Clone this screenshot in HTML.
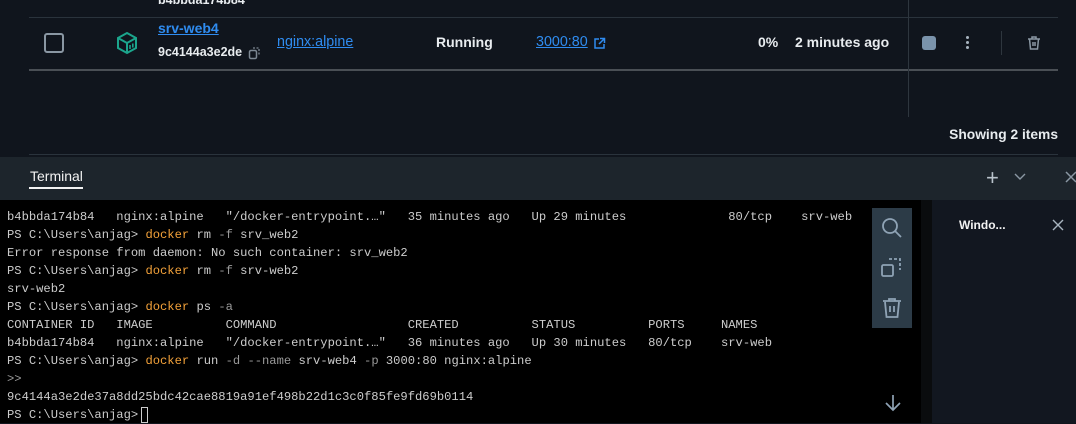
<!DOCTYPE html>
<html><head><style>
*{margin:0;padding:0;box-sizing:border-box}
body{width:1076px;height:423px;overflow:hidden;background:#10151d;font-family:"Liberation Sans",sans-serif;position:relative;color:#e8ecef}
.a{position:absolute}
.t{font-family:"Liberation Mono",monospace;font-size:12.15px;color:#cccccc;white-space:pre;line-height:18px}
.o{color:#f4a23a}.g{color:#9a9a9a}
</style></head><body>
<div class="a" style="left:29px;top:17px;width:1029px;height:1px;background:#2a333c"></div>
<div class="a" style="left:29px;top:69px;width:1029px;height:2px;background:#4a4f55"></div>
<div class="a" style="left:908px;top:0;width:1px;height:117px;background:#2e363e"></div>
<div class="a" style="left:1001px;top:31px;width:1px;height:24px;background:#2e363e"></div>
<div class="a" style="left:29px;top:154px;width:1029px;height:1px;background:#2a333c"></div>
<div class="a" style="left:158px;top:-7px;font-size:12.5px;font-weight:bold;color:#e8ecef">b4bbda174b84</div>
<div class="a" style="left:44px;top:33px;width:20px;height:20px;border:2px solid #8a97a3;border-radius:3px"></div>
<svg class="a" style="left:116px;top:31px" width="22" height="24" viewBox="0 0 22 24"><path d="M11 2L20 7V17L11 22L2 17V7Z M2 7L11 12L20 7 M11 12V22" fill="none" stroke="#1ba58c" stroke-width="2"/><path d="M14 18V14 M16.8 16.5V12.5" stroke="#1ba58c" stroke-width="1.6"/></svg>
<div class="a" style="left:158px;top:20px;font-size:14px;font-weight:bold;color:#2f8cf0;text-decoration:underline">srv-web4</div>
<div class="a" style="left:158px;top:45px;font-size:12.5px;font-weight:bold">9c4144a3e2de</div>
<svg class="a" style="left:248px;top:46px" width="14" height="14"><rect x="1.5" y="4.5" width="7" height="8" rx="1.5" fill="none" stroke="#7d8893" stroke-width="1.5"/><path d="M5 2h6v7" fill="none" stroke="#7d8893" stroke-width="1.3" stroke-dasharray="2 1.5"/></svg>
<div class="a" style="left:277px;top:34px;font-size:14.3px;color:#2f8cf0;text-decoration:underline">nginx:alpine</div>
<div class="a" style="left:436px;top:34px;font-size:14px;font-weight:bold">Running</div>
<div class="a" style="left:536px;top:34px;font-size:14.3px;color:#2f8cf0;text-decoration:underline">3000:80</div>
<svg class="a" style="left:593px;top:37px" width="13" height="13"><path d="M6 2H2v9h9V7 M7 1.5h4.5V6 M11.5 1.5L6 7" fill="none" stroke="#2f8cf0" stroke-width="1.5"/></svg>
<div class="a" style="left:758px;top:34px;font-size:14px;font-weight:bold">0%</div>
<div class="a" style="left:795px;top:34px;font-size:14px;font-weight:bold">2 minutes ago</div>
<div class="a" style="left:922px;top:36px;width:14px;height:14px;background:#7a93ab;border-radius:3px"></div>
<div class="a" style="left:966px;top:36px;width:3px;height:3px;background:#a8b4bf;border-radius:50%;box-shadow:0 5px 0 #a8b4bf,0 10px 0 #a8b4bf"></div>
<svg class="a" style="left:1026px;top:35px" width="16" height="16"><path d="M2 4h12 M6 4V2h4v2 M3.5 4l1 10h7l1-10 M7 7v4 M9 7v4" fill="none" stroke="#8a97a3" stroke-width="1.5"/></svg>
<div class="a" style="right:18px;top:127px;font-size:13.8px;font-weight:bold">Showing 2 items</div>
<div class="a" style="left:0;top:157px;width:1076px;height:43px;background:#1d252c"></div>
<div class="a" style="left:30px;top:168px;font-size:14px;color:#f2f2f2">Terminal</div>
<div class="a" style="left:29px;top:187px;width:54px;height:2px;background:#f2f2f2"></div>
<div class="a" style="left:986px;top:165px;font-size:22px;color:#b9c3cc">+</div>
<svg class="a" style="left:1013px;top:172px" width="14" height="10"><path d="M2 2l5 5 5-5" fill="none" stroke="#8a97a3" stroke-width="1.4"/></svg>
<svg class="a" style="left:1064px;top:170px" width="12" height="14"><path d="M2 2l10 10 M12 2L2 12" stroke="#8a97a3" stroke-width="1.5"/></svg>
<div class="a" style="left:0;top:200px;width:921px;height:223px;background:#000"></div>
<div class="a" style="left:921px;top:200px;width:11px;height:223px;background:#0a0c0e"></div>
<div class="a" style="left:932px;top:200px;width:144px;height:223px;background:#121720"></div>
<div class="a" style="left:959px;top:218px;font-size:12px;font-weight:bold;color:#f2f2f2">Windo...</div>
<svg class="a" style="left:1052px;top:219px" width="12" height="12"><path d="M1 1l10 10 M11 1L1 11" stroke="#a8b4bf" stroke-width="1.4"/></svg>
<div class="a t" style="left:7px;top:208px">b4bbda174b84   nginx:alpine   "/docker-entrypoint.…"   35 minutes ago   Up 29 minutes              80/tcp    srv-web
PS C:\Users\anjag&gt; <span class="o">docker</span> rm <span class="g">-f</span> srv_web2
Error response from daemon: No such container: srv_web2
PS C:\Users\anjag&gt; <span class="o">docker</span> rm <span class="g">-f</span> srv-web2
srv-web2
PS C:\Users\anjag&gt; <span class="o">docker</span> ps <span class="g">-a</span>
CONTAINER ID   IMAGE          COMMAND                  CREATED          STATUS          PORTS     NAMES
b4bbda174b84   nginx:alpine   "/docker-entrypoint.…"   36 minutes ago   Up 30 minutes   80/tcp    srv-web
PS C:\Users\anjag&gt; <span class="o">docker</span> run <span class="g">-d --name</span> srv-web4 <span class="g">-p</span> 3000:80 nginx:alpine
<span class="g">&gt;&gt;</span>
9c4144a3e2de37a8dd25bdc42cae8819a91ef498b22d1c3c0f85fe9fd69b0114
PS C:\Users\anjag&gt;</div>
<div class="a" style="left:141px;top:407px;width:7px;height:16px;border:1px solid #ccc"></div>
<div class="a" style="left:872px;top:208px;width:40px;height:120px;background:#2c3b47"></div>
<svg class="a" style="left:880px;top:216px" width="24" height="24"><circle cx="10" cy="10" r="7" fill="none" stroke="#8fa3b5" stroke-width="1.8"/><path d="M15 15l6 6" stroke="#8fa3b5" stroke-width="1.8"/></svg>
<svg class="a" style="left:880px;top:256px" width="24" height="24"><rect x="2" y="9" width="11" height="11" rx="1.5" fill="none" stroke="#8fa3b5" stroke-width="1.8"/><path d="M9 3h11v11" fill="none" stroke="#8fa3b5" stroke-width="1.8" stroke-dasharray="3 2"/></svg>
<svg class="a" style="left:880px;top:296px" width="24" height="24"><path d="M3 5h18 M9 5V3h6v2 M5 6l1.5 15h11L19 6 M10 10v6 M14 10v6" fill="none" stroke="#8fa3b5" stroke-width="1.8"/></svg>
<svg class="a" style="left:883px;top:393px" width="20" height="20"><path d="M10 2v15 M3 10l7 7 7-7" fill="none" stroke="#8fa3b5" stroke-width="1.7"/></svg>
</body></html>
